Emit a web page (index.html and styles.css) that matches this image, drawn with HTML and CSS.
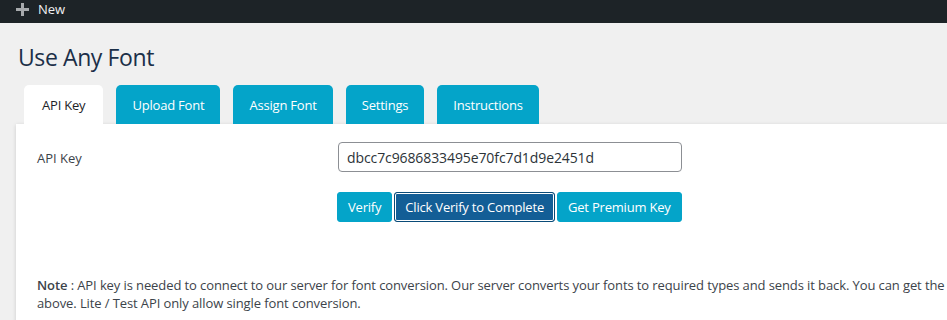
FILE: index.html
```html
<!DOCTYPE html>
<html lang="en">
<head>
    <meta charset="UTF-8">
    <title>Use Any Font</title>
    <link rel="stylesheet" href="styles.css">
</head>
<body>

    <!-- Admin Bar -->
    <div class="adminbar">
        <span class="new-link">
            <svg class="plus" width="13" height="13" viewBox="0 0 13 13"><rect x="5" y="0" width="3" height="13" fill="#a7aaad"/><rect x="0" y="5" width="13" height="3" fill="#a7aaad"/></svg>
            New
        </span>
    </div>

    <div class="wrap">
        <h1>Use Any Font</h1>

        <!-- Tabs -->
        <div class="nav-tabs">
            <a class="tab active" href="#">API Key</a>
            <a class="tab" href="#">Upload Font</a>
            <a class="tab" href="#">Assign Font</a>
            <a class="tab" href="#">Settings</a>
            <a class="tab" href="#">Instructions</a>
        </div>

        <!-- Tab Content -->
        <div class="panel">
            <div class="field-row">
                <label class="field-label" for="apikey">API Key</label>
                <div class="field-input">
                    <input type="text" id="apikey" value="dbcc7c9686833495e70fc7d1d9e2451d">
                    <div class="btn-row">
                        <button class="btn">Verify</button>
                        <button class="btn btn-dark">Click Verify to Complete</button>
                        <button class="btn">Get Premium Key</button>
                    </div>
                </div>
            </div>

            <p class="note"><strong>Note</strong> : API key is needed to connect to our server for font conversion. Our server converts your fonts to required types and sends it back. You can get the premium key from the link above.<br>above. Lite / Test API only allow single font conversion.</p>
        </div>
    </div>

</body>
</html>
```

FILE: styles.css
```css
/* General */
body {
    margin: 0;
    padding: 0;
    background-color: #f0f0f0;
    font-family: 'Open Sans', 'Noto Sans', sans-serif;
    font-size: 13px;
    color: #3c434a;
    overflow: hidden;
}

/* Admin Bar */
.adminbar {
    background-color: #1d2327;
    height: 23px;
    padding-left: 16px;
    color: #f0f0f1;
}

.new-link {
    display: flex;
    align-items: center;
    gap: 9px;
    height: 18px;
    font-size: 13px;
}

.plus {
    display: block;
}

/* Page */
.wrap {
    padding-left: 16px;
}

h1 {
    margin: 20px 0 13px 2px;
    font-size: 23px;
    font-weight: 400;
    line-height: 29px;
    letter-spacing: -0.4px;
    color: #1b2f48;
}

/* Tabs */
.nav-tabs {
    display: flex;
    gap: 13px;
    padding-left: 8px;
}

.tab {
    display: block;
    height: 39px;
    line-height: 40px;
    padding: 0 16px;
    background-color: #04a4c9;
    color: white;
    text-decoration: none;
    font-size: 13px;
    letter-spacing: -0.2px;
    border-radius: 5px 5px 0 0;
}

.tab.active {
    padding: 0 18px;
    background-color: white;
    color: #1d2327;
    position: relative;
    z-index: 1;
}

/* Panel */
.panel {
    background-color: white;
    width: 1100px;
    padding: 18px 20px 20px 21px;
    box-shadow: 0 1px 4px rgba(0, 0, 0, 0.15);
}

.field-row {
    display: flex;
}

.field-label {
    width: 301px;
    padding-top: 7px;
    color: #3c434a;
}

.field-input input {
    display: block;
    box-sizing: border-box;
    width: 344px;
    height: 30px;
    padding: 0 8px;
    font-family: inherit;
    font-size: 14px;
    letter-spacing: -0.1px;
    color: #2c3338;
    border: 1px solid #8c8f94;
    border-radius: 4px;
}

.btn-row {
    display: flex;
    gap: 2px;
    margin-top: 20px;
    margin-left: -1px;
}

.btn {
    height: 30px;
    padding: 0 10px;
    background-color: #04a4c9;
    color: white;
    font-family: inherit;
    font-size: 13px;
    letter-spacing: -0.2px;
    border: 1px solid #04a4c9;
    border-radius: 3px;
}

.btn-dark {
    background-color: #135e96;
    border-color: #0a4b78;
    box-shadow: inset 0 0 0 1px #fff;
}

.note {
    margin: 54px 0 0 0;
    line-height: 18px;
    white-space: nowrap;
    letter-spacing: -0.1px;
    color: #3c434a;
}

.note strong {
    font-weight: 600;
}
```
